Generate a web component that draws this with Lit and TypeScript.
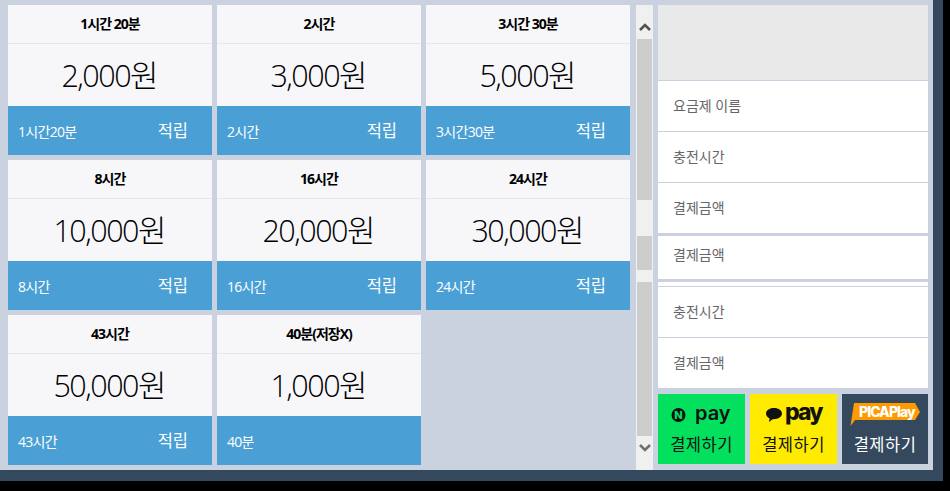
import { LitElement, html, css } from "lit";
import { customElement } from "lit/decorators.js";

const plans = [
  { head: "1시간 20분", price: "2,000", label: "1시간20분", save: true },
  { head: "2시간", price: "3,000", label: "2시간", save: true },
  { head: "3시간 30분", price: "5,000", label: "3시간30분", save: true },
  { head: "8시간", price: "10,000", label: "8시간", save: true },
  { head: "16시간", price: "20,000", label: "16시간", save: true },
  { head: "24시간", price: "30,000", label: "24시간", save: true },
  { head: "43시간", price: "50,000", label: "43시간", save: true },
  { head: "40분(저장X)", price: "1,000", label: "40분", save: false },
];

@customElement("app-root")
export class AppRoot extends LitElement {
  static styles = css`
    :host {
      display: block;
      width: 950px;
      height: 491px;
      background: #000;
      font-family: "Open Sans", "Noto Sans CJK KR", sans-serif;
      overflow: hidden;
    }
    .frame {
      width: 943px;
      height: 481px;
      background: #34495e;
    }
    .panel {
      width: 933px;
      height: 470px;
      background: #cad1df;
      display: flex;
    }
    .grid {
      width: 622px;
      margin: 5px 0 0 8px;
      display: grid;
      grid-template-columns: repeat(3, 204px);
      grid-auto-rows: 150px;
      gap: 5px;
      align-content: start;
    }
    .card {
      display: flex;
      flex-direction: column;
      background: #f7f7fa;
    }
    .head {
      height: 36px;
      padding-bottom: 2px;
      border-bottom: 1px solid #e6e7ea;
      display: flex;
      align-items: center;
      justify-content: center;
      font-size: 14px;
      font-weight: 700;
      letter-spacing: -1px;
      color: #000;
    }
    .price {
      height: 62px;
      display: flex;
      align-items: center;
      justify-content: center;
      font-size: 30.5px;
      font-weight: 300;
      letter-spacing: -1.5px;
      color: #000;
      padding-bottom: 4px;
      box-sizing: border-box;
    }
    .unit {
      letter-spacing: 0;
      font-size: 31px;
    }
    .foot {
      height: 49px;
      background: #4aa0d5;
      color: #fff;
      display: flex;
      align-items: center;
      justify-content: space-between;
      padding: 0 24px 0 10px;
      font-size: 14px;
      letter-spacing: -0.7px;
    }
    .foot .save {
      font-size: 16.5px;
      letter-spacing: 0;
      margin-top: -2px;
    }
    .scroll {
      width: 17px;
      height: 465px;
      margin: 5px 0 0 6px;
      background: #f0f0f0;
      display: flex;
      flex-direction: column;
      align-items: center;
    }
    .arrow {
      height: 34px;
      width: 17px;
      display: flex;
      align-items: center;
      justify-content: center;
      flex: none;
      box-sizing: border-box;
      padding-top: 10px;
    }
    .arrow.down {
      padding-top: 0;
      padding-bottom: 10px;
    }
    .thumb {
      width: 15px;
      background: #cdcdcd;
      flex: none;
    }
    .t1 { height: 161px; }
    .t2 { height: 34px; margin-top: 36px; }
    .t3 { height: 154px; margin-top: 12px; }
    .side {
      width: 270px;
      margin: 5px 0 0 5px;
      display: flex;
      flex-direction: column;
    }
    .poster {
      height: 75px;
      background: #e9e9e9;
      flex: none;
    }
    .group {
      background: #fff;
      flex: none;
    }
    .row {
      height: 48px;
      padding: 0 0 2px 15px;
      border-top: 1px solid #cad1df;
      display: flex;
      align-items: center;
      font-size: 14px;
      color: #666;
    }
    .single {
      height: 43px;
      margin-top: 3px;
      background: #fff;
      display: flex;
      align-items: center;
      padding: 0 0 8px 15px;
      box-sizing: border-box;
      font-size: 14px;
      color: #666;
      flex: none;
    }
    .tail {
      margin-top: 3px;
      padding-top: 4px;
    }
    .pays {
      margin-top: 6px;
      display: grid;
      grid-template-columns: 87px 87px 86px;
      gap: 5px;
      height: 70px;
    }
    .pay {
      display: flex;
      flex-direction: column;
      align-items: center;
      font-size: 16.5px;
      color: #111;
      letter-spacing: 0.5px;
    }
    .pay .logo {
      height: 36px;
      display: flex;
      align-items: center;
      justify-content: center;
      margin-top: 3px;
      letter-spacing: 0;
    }
    .pay .txt {
      line-height: 24px;
    }
    .npay { background: #03e05d; }
    .kpay { background: #ffeb00; }
    .ppay { background: #34495e; color: #fff; }
    svg { display: block; overflow: visible; }
    svg text { font-family: "Inter", "Liberation Sans", sans-serif; }
    .np { font-size: 20px; font-weight: 600; fill: #111; }
    .kp { font-size: 23px; font-weight: 800; fill: #111; letter-spacing: -1.9px; }
    .pp { font-size: 14px; font-weight: 800; fill: #fff; letter-spacing: -1px; }
    .n { font-size: 11px; font-weight: 800; fill: #03e05d; }
  `;

  render() {
    return html`
      <div class="frame">
        <div class="panel">
          <div class="grid">
            ${plans.map(
              (p) => html`
                <div class="card">
                  <div class="head">${p.head}</div>
                  <div class="price"><span>${p.price}<span class="unit">원</span></span></div>
                  <div class="foot">
                    <span>${p.label}</span>
                    ${p.save ? html`<span class="save">적립</span>` : ""}
                  </div>
                </div>
              `
            )}
          </div>
          <div class="scroll">
            <div class="arrow">
              <svg width="12" height="8" viewBox="0 0 12 8"><path d="M1 7 L6 2 L11 7" fill="none" stroke="#505050" stroke-width="2.6"/></svg>
            </div>
            <div class="thumb t1"></div>
            <div class="thumb t2"></div>
            <div class="thumb t3"></div>
            <div class="arrow down">
              <svg width="12" height="8" viewBox="0 0 12 8"><path d="M1 1 L6 6 L11 1" fill="none" stroke="#707070" stroke-width="2.6"/></svg>
            </div>
          </div>
          <div class="side">
            <div class="poster"></div>
            <div class="group">
              <div class="row">요금제 이름</div>
              <div class="row">충전시간</div>
              <div class="row">결제금액</div>
            </div>
            <div class="single">결제금액</div>
            <div class="group tail">
              <div class="row">충전시간</div>
              <div class="row">결제금액</div>
            </div>
            <div class="pays">
              <div class="pay npay">
                <div class="logo">
                  <svg width="60" height="24" viewBox="0 0 60 24">
                    <circle cx="6.5" cy="12" r="7" fill="#111"/>
                    <text x="6.5" y="16" text-anchor="middle" class="n">N</text>
                    <text x="23" y="17" class="np">pay</text>
                  </svg>
                </div>
                <div class="txt">결제하기</div>
              </div>
              <div class="pay kpay">
                <div class="logo">
                  <svg width="58" height="24" viewBox="0 0 58 24">
                    <path d="M9 5 C4 5 1 7.6 1 10.6 C1 12.9 2.6 14.6 4.6 15.5 L4 19 L7.6 16.3 C13 16.6 17 14 17 10.6 C17 7.6 14 5 9 5 Z" fill="#111"/>
                    <text x="20" y="17" class="kp">pay</text>
                  </svg>
                </div>
                <div class="txt">결제하기</div>
              </div>
              <div class="pay ppay">
                <div class="logo">
                  <svg width="70" height="24" viewBox="0 0 70 24">
                    <path d="M4 0 H65 L70 9 L65 17 H5 L0.5 23 Z" fill="#ff9a00"/>
                    <text x="9" y="13.5" class="pp">PICAPlay</text>
                  </svg>
                </div>
                <div class="txt">결제하기</div>
              </div>
            </div>
          </div>
        </div>
      </div>
    `;
  }
}
